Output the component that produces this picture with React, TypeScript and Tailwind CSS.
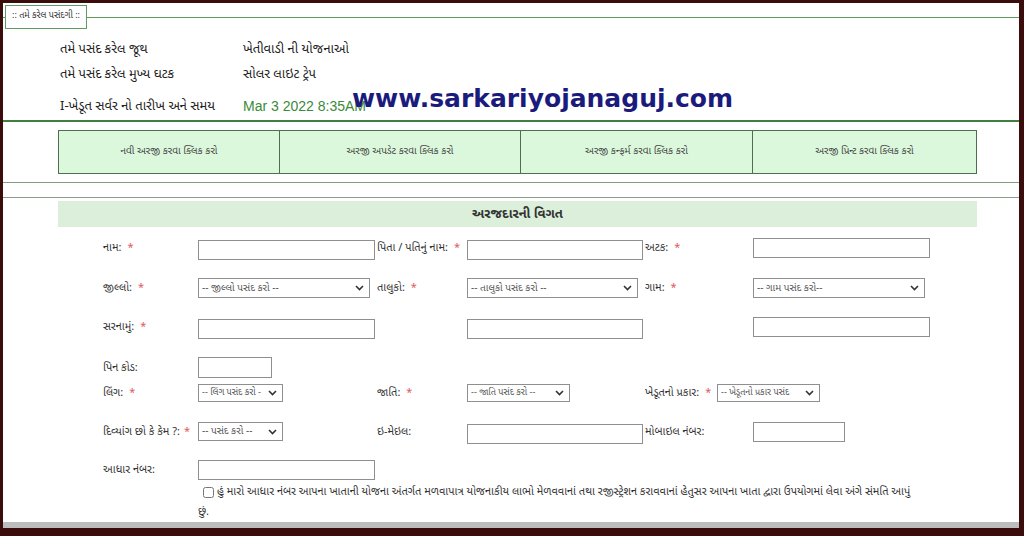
import React from "react";

const GU = { fontFamily: '"Noto Sans Gujarati", "Lohit Gujarati", "Noto Sans", "DejaVu Sans", sans-serif' };

function Req() {
  return <span className="ml-[6px] text-[#e05a5a]">*</span>;
}

function Label({ text, req, w }: { text: string; req?: boolean; w: string }) {
  return (
    <div className={`${w} h-[20px] flex items-center shrink-0 text-[11px] text-[#333] whitespace-nowrap`}>
      <span>{text}</span>
      {req && <Req />}
    </div>
  );
}

function Input({ w, h = "h-[20px]" }: { w: string; h?: string }) {
  return <input className={`${w} ${h} shrink-0 border border-[#8f8f8f] bg-white outline-none`} />;
}

function Select({ w, text, h = "h-[20px]", small }: { w: string; text: string; h?: string; small?: boolean }) {
  return (
    <div className={`${w} ${h} relative shrink-0 border border-[#8f8f8f] bg-white flex items-center pl-[3px] pr-[16px] overflow-hidden`}>
      <span className={`${small ? "text-[9px]" : "text-[10px]"} text-[#555] whitespace-nowrap`}>{text}</span>
      <svg className="absolute right-[5px] top-1/2 -translate-y-1/2" width="9" height="6" viewBox="0 0 9 6">
        <path d="M1 1 L4.5 4.5 L8 1" stroke="#333" strokeWidth="1.6" fill="none" />
      </svg>
    </div>
  );
}

export default function App() {
  return (
    <div className="w-[1024px] h-[536px] bg-[#3a0c0c] pt-[3px] pl-[3px] pr-[5px] overflow-hidden" style={GU}>
      <div className="w-[1016px] h-[525px] bg-white flex flex-col">
        {/* fieldset summary */}
        <fieldset className="border-t border-[#5f9a5f] mt-[2px] relative">
          <legend className="ml-[2px] border border-[#5f9a5f] px-[6px] h-[24px] flex items-center text-[9px] text-[#333] bg-white">
            :: તમે કરેલ પસંદગી ::
          </legend>
          <div className="pl-[57px] pt-[8px] flex flex-col text-[13px] text-[#222]">
            <div className="flex h-[25px] items-center">
              <span className="w-[183px]">તમે પસંદ કરેલ જૂથ</span>
              <span>ખેતીવાડી ની યોજનાઓ</span>
            </div>
            <div className="flex h-[25px] items-center">
              <span className="w-[183px]">તમે પસંદ કરેલ મુખ્ય ઘટક</span>
              <span>સોલર લાઇટ ટ્રેપ</span>
            </div>
            <div className="flex h-[33px] pt-[6px] items-center relative">
              <span className="w-[183px]">I-ખેડૂત સર્વર નો તારીખ અને સમય</span>
              <span className="text-[14px] text-[#3a8a3a]" style={{ fontFamily: '"Liberation Sans", Arial, sans-serif' }}>
                Mar 3 2022 8:35AM
              </span>
              <span
                className="absolute left-[292px] top-[-7px] text-[25px] leading-[37px] font-bold text-[#1b1b7d] whitespace-nowrap"
                style={{ fontFamily: '"DejaVu Sans", Verdana, sans-serif' }}
              >
                www.sarkariyojanaguj.com
              </span>
            </div>
          </div>
        </fieldset>

        <div className="h-[2px] bg-[#3f7f3f]" />

        {/* buttons */}
        <div className="mt-[8px] ml-[55px] w-[919px] h-[47px] border border-[#4d6f4d] bg-[#dcf8dc] flex text-[10px] text-[#444]">
          <div className="w-[221px] flex items-center justify-center border-r border-[#4d6f4d]">નવી અરજી કરવા ક્લિક કરો</div>
          <div className="w-[241px] flex items-center justify-center border-r border-[#4d6f4d]">અરજી અપડેટ કરવા ક્લિક કરો</div>
          <div className="w-[232px] flex items-center justify-center border-r border-[#4d6f4d]">અરજી કન્ફર્મ કરવા ક્લિક કરો</div>
          <div className="flex-1 flex items-center justify-center">અરજી પ્રિન્ટ કરવા ક્લિક કરો</div>
        </div>

        <div className="mt-[8px] h-[1px] bg-[#7f9f7f]" />
        <div className="mt-[14px] h-[1px] bg-[#8c9a8c]" />

        {/* section header */}
        <div className="mt-[4px] ml-[55px] w-[919px] h-[28px] bg-[#dbefdb] flex items-center justify-center text-[13px] font-bold text-[#333]">
          અરજદારની વિગત
        </div>

        {/* form */}
        <div className="pl-[100px] pt-[11px] flex flex-col">
          <div className="flex h-[40px] items-start">
            <Label text="નામ:" req w="w-[95px]" />
            <div className="w-[179px] shrink-0"><Input w="w-[177px]" /></div>
            <Label text="પિતા / પતિનું નામ:" req w="w-[90px]" />
            <div className="w-[178px] shrink-0"><Input w="w-[176px]" /></div>
            <Label text="અટક:" req w="w-[108px]" />
            <Input w="w-[177px]" />
          </div>
          <div className="flex h-[39px] items-start">
            <Label text="જીલ્લો:" req w="w-[95px]" />
            <div className="w-[179px] shrink-0"><Select w="w-[172px]" text="-- જીલ્લો પસંદ કરો --" /></div>
            <Label text="તાલુકો:" req w="w-[90px]" />
            <div className="w-[178px] shrink-0"><Select w="w-[171px]" text="-- તાલુકો પસંદ કરો --" /></div>
            <Label text="ગામ:" req w="w-[108px]" />
            <Select w="w-[172px]" text="-- ગામ પસંદ કરો--" />
          </div>
          <div className="flex h-[40px] items-start">
            <Label text="સરનામું:" req w="w-[95px]" />
            <div className="w-[179px] shrink-0"><Input w="w-[177px]" /></div>
            <div className="w-[90px] shrink-0" />
            <div className="w-[178px] shrink-0"><Input w="w-[176px]" /></div>
            <div className="w-[108px] shrink-0" />
            <Input w="w-[177px]" />
          </div>
          <div className="flex h-[27px] items-start">
            <div className="w-[95px] h-[21px] flex items-center text-[11px] text-[#333]">પિન કોડ:</div>
            <Input w="w-[74px]" h="h-[21px]" />
          </div>
          <div className="flex h-[38px] items-start">
            <div className="w-[95px] h-[18px] flex items-center text-[11px] text-[#333]"><span>લિંગ:</span><Req /></div>
            <div className="w-[179px] shrink-0"><Select w="w-[85px]" h="h-[18px]" small text="-- લિંગ પસંદ કરો -" /></div>
            <div className="w-[90px] h-[18px] flex items-center text-[11px] text-[#333]"><span>જાતિ:</span><Req /></div>
            <div className="w-[178px] shrink-0"><Select w="w-[103px]" h="h-[18px]" small text="-- જાતિ પસંદ કરો --" /></div>
            <div className="w-[72px] h-[18px] flex items-center text-[11px] text-[#333] whitespace-nowrap"><span>ખેડૂતનો પ્રકાર:</span><Req /></div>
            <Select w="w-[103px]" h="h-[18px]" small text="-- ખેડૂતનો પ્રકાર પસંદ" />
          </div>
          <div className="flex h-[38px] items-start">
            <div className="w-[95px] h-[19px] flex items-center text-[11px] text-[#333] whitespace-nowrap"><span>દિવ્યાંગ છો કે કેમ ?:</span><span className="ml-[4px] text-[#e05a5a]">*</span></div>
            <div className="w-[179px] shrink-0"><Select w="w-[85px]" h="h-[19px]" text="-- પસંદ કરો --" /></div>
            <Label text="ઇ-મેઇલ:" w="w-[90px]" />
            <div className="w-[178px] shrink-0"><Input w="w-[176px]" /></div>
            <Label text="મોબાઇલ નંબર:" w="w-[108px]" />
            <Input w="w-[92px]" />
          </div>
          <div className="flex h-[22px] items-start">
            <Label text="આધાર નંબર:" w="w-[95px]" />
            <Input w="w-[177px]" />
          </div>
          <div className="ml-[95px] w-[715px] text-[11px] text-[#333] leading-[20px]">
            <input type="checkbox" className="ml-[5px] mr-[3px] w-[11px] h-[11px] align-middle" />
            હું મારો આધાર નંબર આપના ખાતાની યોજના અંતર્ગત મળવાપાત્ર યોજનાકીય લાભો મેળવવાનાં તથા રજીસ્ટ્રેશન કરાવવાનાં હેતુસર આપના ખાતા દ્વારા ઉપયોગમાં લેવા અંગે સંમતિ આપું છું.
          </div>
        </div>
        <div className="flex-1" />
        <div className="h-[6px] bg-[#bdbdbd]" />
      </div>
    </div>
  );
}
